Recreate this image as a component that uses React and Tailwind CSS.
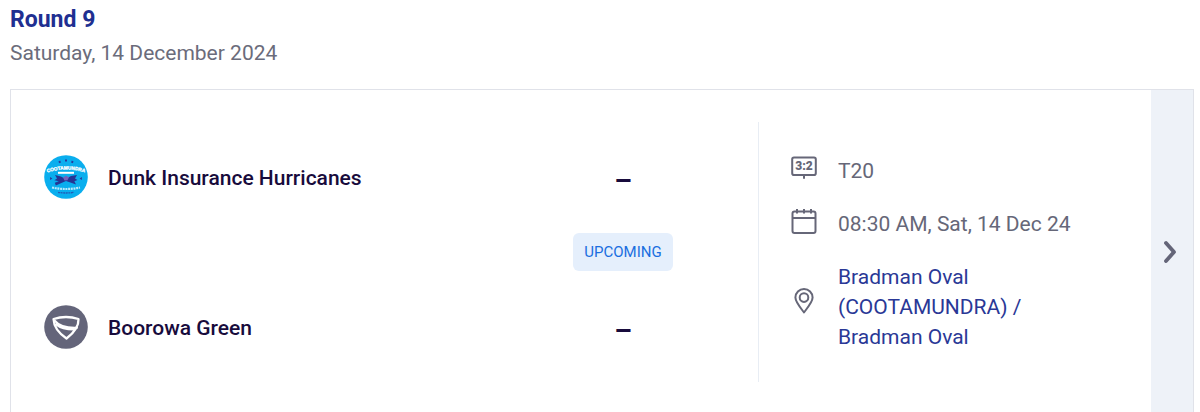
const ScoreboardIcon = () => (
  <svg width="26" height="26" viewBox="0 0 26 26" fill="none" stroke="#666778" strokeWidth="2" aria-hidden="true">
    <rect x="1.2" y="1.4" width="23.6" height="17.6" rx="1.8" />
    <path d="M13 19v3.8" />
    <text
      x="13"
      y="14.4"
      textAnchor="middle"
      fontFamily="Roboto, sans-serif"
      fontWeight="900"
      fontSize="12"
      fill="#666778"
      stroke="none"
    >
      3:2
    </text>
  </svg>
);

const CalendarIcon = () => (
  <svg width="26" height="26" viewBox="0 0 26 26" fill="none" stroke="#666778" strokeWidth="2" aria-hidden="true">
    <rect x="1.5" y="2.5" width="23" height="21.5" rx="2" />
    <path d="M1.5 9h23" />
    <path d="M6 0v4.6M13 0v4.6M20 0v4.6" />
  </svg>
);

const PinIcon = () => (
  <svg
    className="box-content pb-2"
    width="26"
    height="26"
    viewBox="0 0 26 26"
    fill="none"
    stroke="#666778"
    strokeWidth="2"
    aria-hidden="true"
  >
    <path
      strokeLinejoin="round"
      d="M13 24.4C9.600 20 4.400 14 4.400 9.600a8.600 8.600 0 0 1 17.200 0c0 4.400-5.200 10.400-8.600 14.800z"
    />
    <circle cx="13" cy="9.600" r="4.300" />
  </svg>
);

const HurricanesLogo = () => (
  <svg className="shrink-0" width="44" height="44" viewBox="0 0 44 44" aria-hidden="true">
    <circle cx="22" cy="22" r="21.8" fill="#0aaeee" />
    <path
      fill="#2a3a9c"
      d="M21 4.6h2v2h-2zM14.4 6.4l1.8-.8.8 1.8-1.8.8zM27 7.4l.8-1.8 1.8.8-.8 1.800zM6 22l2.400 1.400L6.200 25zM38 22l-2.400 1.400 2.200 1.600z"
    />
    <path id="club-arc" d="M0 18.500Q22 10.500 44 18.500" fill="none" />
    <text
      fontFamily="Liberation Sans, sans-serif"
      fontWeight="700"
      fontSize="4.8"
      fill="#fff"
      stroke="#fff"
      strokeWidth="0.3"
      textAnchor="middle"
    >
      <textPath href="#club-arc" startOffset="50%">
        COOTAMUNDRA
      </textPath>
    </text>
    <path d="M14 17.800h16" stroke="#fff" strokeWidth="2" />
    <path
      fill="#263594"
      d="M11 20l6 1.400 3.400 2 3-.400 3.600-2 6-1-2 3.400 2.400 1.600-3 1.200 1.600 3.200-5.600-1.800-4.400-1.600-4.600 2-5.600 2.600-1-2.800 4-1.600-4.400-1 2.600-1.600z"
    />
    <path fill="#7462bd" d="M19 22.500l3-1.800 3 1.500-1.500 3-3 .2z" />
    <path d="M8 32.500q14 3 28 0" fill="none" stroke="#b9e9fb" strokeWidth="2.200" strokeDasharray="2 .7" />
    <path d="M14 37.300q8 1.400 16 0" fill="none" stroke="#2459b5" strokeWidth="1.300" strokeDasharray="2 .6" />
  </svg>
);

const ShieldLogo = () => (
  <svg className="shrink-0" width="44" height="44" viewBox="0 0 44 44" aria-hidden="true">
    <circle cx="22" cy="22" r="21.8" fill="#64657a" />
    <g fill="none" stroke="#fff" strokeLinejoin="round" strokeLinecap="round">
      <path
        strokeWidth="2.300"
        d="M9.500 14Q22 10 34.500 14Q35 24 22.500 33.500Q10 25 9.500 14z"
      />
      <path strokeWidth="2" d="M10.500 15.500Q17 23.500 33 22.800M12 19.500Q18 24.500 30 24.600" />
    </g>
  </svg>
);

const teams = [
  { name: "Dunk Insurance Hurricanes", logo: <HurricanesLogo />, score: "–" },
  { name: "Boorowa Green", logo: <ShieldLogo />, score: "–" },
];

const TeamRow = ({ team }) => (
  <div className="flex items-center h-11 text-[#180b3c]">
    {team.logo}
    <span className="flex-1 ml-5 pt-1 text-[21px] font-medium">
      {team.name}
    </span>
    <span className="w-[100px] pt-2 text-center text-[28px] font-bold">
      {team.score}
    </span>
  </div>
);

const DetailRow = ({ icon, children }) => (
  <li className="flex items-center gap-[21px]">
    <span className="shrink-0 pb-1">{icon}</span>
    {children}
  </li>
);

const App = () => {
  return (
    <main className="pt-0.5 pl-[10px] pr-[6px] bg-white font-['Roboto',sans-serif]">
      <header className="mb-[21px]">
        <h2 className="text-[23px] leading-9 font-bold text-[#202f91]">
          Round 9
        </h2>
        <p className="text-[21px] leading-[30px] text-[#6b6c7b]">
          Saturday, 14 December 2024
        </p>
      </header>

      {/* Fixture card */}
      <article className="flex border border-[#e0e2e9]">
        <div className="flex flex-1 py-8">
          {/* Teams and status */}
          <section className="flex flex-1 flex-col justify-center gap-[34px] pl-[33px] pr-[85px] border-r border-[#e8edf4]">
            <TeamRow team={teams[0]} />
            <div className="flex justify-end">
              <span className="w-[100px] rounded-md bg-[#e5effc] pt-px text-center text-[15px] leading-[37px] text-[#1a6ee0]">
                UPCOMING
              </span>
            </div>
            <TeamRow team={teams[1]} />
          </section>

          {/* Match details */}
          <section className="flex items-center w-[392px] h-[260px] px-8">
            <ul className="flex flex-col gap-[23px] pt-1 text-[21px] leading-[30px] text-[#666778]">
              <DetailRow icon={<ScoreboardIcon />}>
                <span>T20</span>
              </DetailRow>
              <DetailRow icon={<CalendarIcon />}>
                <time dateTime="2024-12-14T08:30">
                  08:30 AM, Sat, 14 Dec 24
                </time>
              </DetailRow>
              <DetailRow icon={<PinIcon />}>
                <a href="#venue" className="max-w-60 text-[#2a3896]">
                  Bradman Oval (COOTAMUNDRA) / Bradman Oval
                </a>
              </DetailRow>
            </ul>
          </section>
        </div>

        <a
          href="#match"
          aria-label="View match"
          className="flex items-center justify-center w-[42px] pr-1 bg-[#eef2f8]"
        >
          <svg width="14" height="24" viewBox="0 0 14 24" fill="none" aria-hidden="true">
            <path
              d="M3 3l8 9-8 9"
              stroke="#646578"
              strokeWidth="3.800"
              strokeLinecap="round"
              strokeLinejoin="round"
            />
          </svg>
        </a>
      </article>
    </main>
  );
};

export default App;
